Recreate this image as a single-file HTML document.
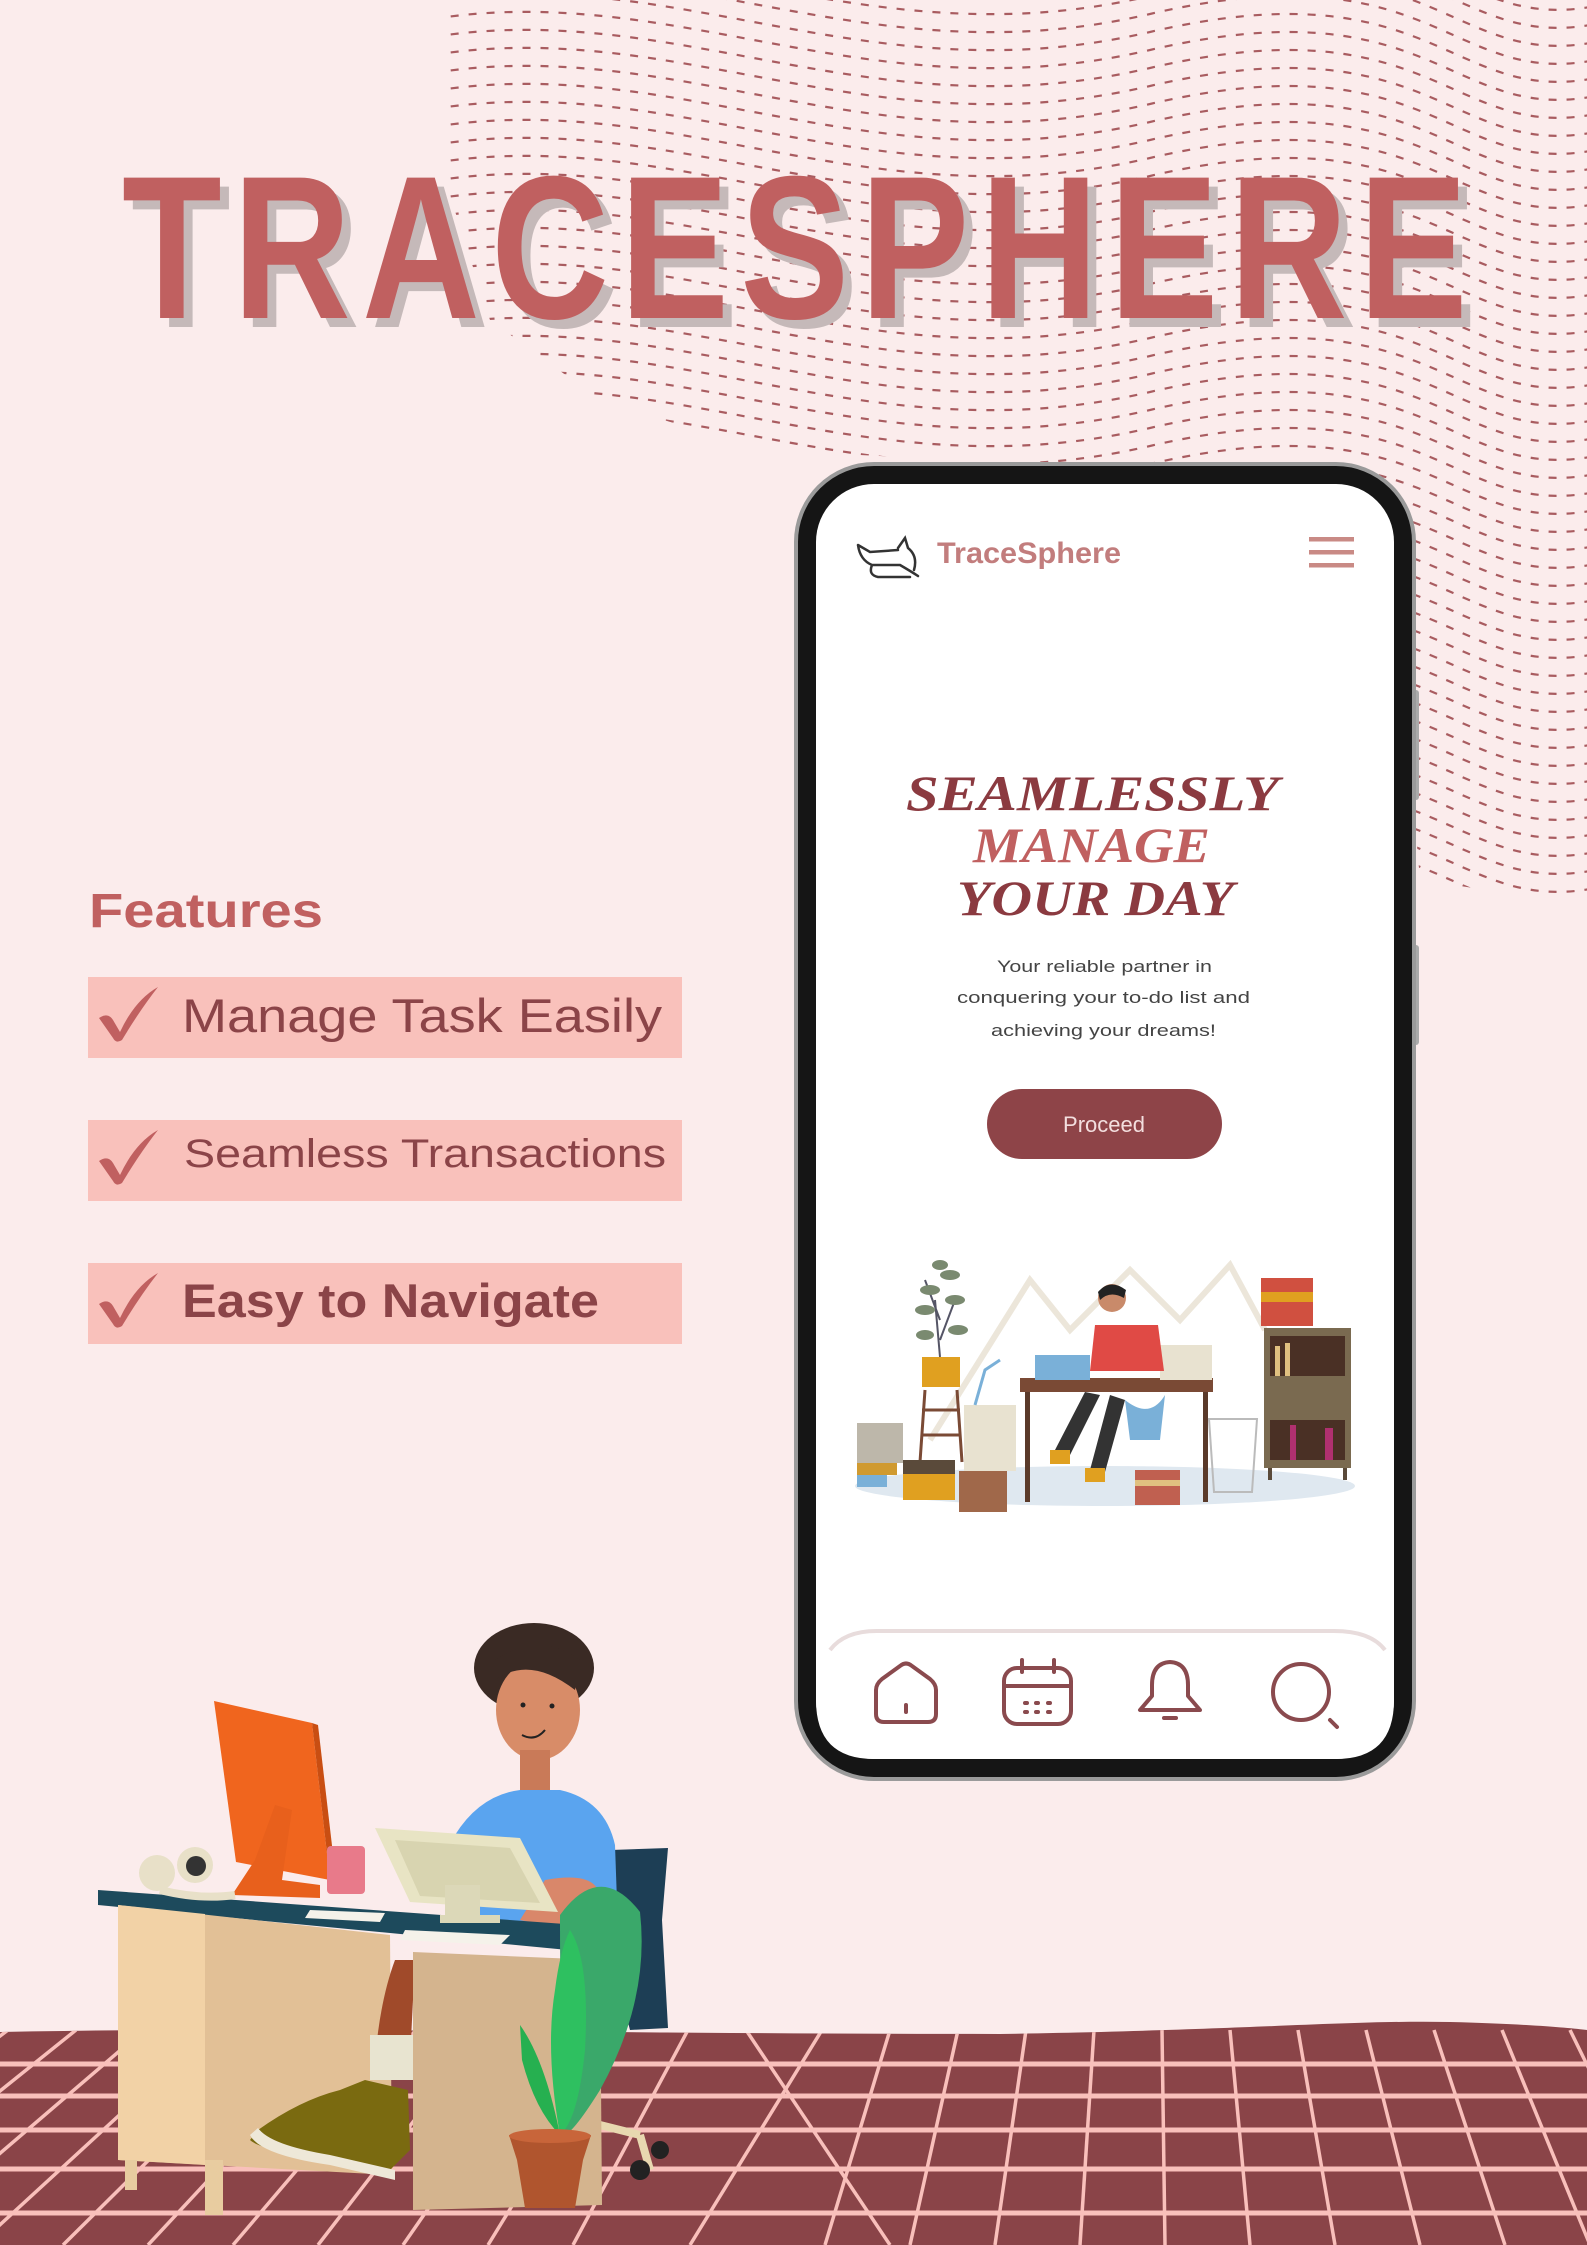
<!DOCTYPE html>
<html><head><meta charset="utf-8"><style>
html,body{margin:0;padding:0;background:#fbecec;}
svg{display:block;}
</style></head><body>
<svg width="1587" height="2245" viewBox="0 0 1587 2245" xmlns="http://www.w3.org/2000/svg">
<defs>
<clipPath id="blob"><path d="M445,0 L1587,0 L1587,905 L1420,880 L1400,650 L1250,480 L1000,462 L760,450 L600,400 L490,320 L445,180 Z"/></clipPath>
<path id="w" d="M380,0 C650,-70 850,90 1150,20 S1450,110 1620,60" fill="none" stroke="#9b4348" stroke-width="2.2" stroke-dasharray="8 10"/>
<clipPath id="floor"><path d="M0,2032 C300,2026 600,2034 1000,2034 C1250,2030 1350,2020 1450,2022 C1530,2024 1570,2028 1587,2030 L1587,2245 L0,2245Z"/></clipPath>
</defs>
<rect width="1587" height="2245" fill="#fbecec"/>
<g clip-path="url(#blob)" opacity="0.85">
<use href="#w" y="-60"/><use href="#w" y="-42"/><use href="#w" y="-24"/><use href="#w" y="-6"/><use href="#w" y="12"/><use href="#w" y="30"/><use href="#w" y="48"/><use href="#w" y="66"/><use href="#w" y="84"/><use href="#w" y="102"/><use href="#w" y="120"/><use href="#w" y="138"/><use href="#w" y="156"/><use href="#w" y="174"/><use href="#w" y="192"/><use href="#w" y="210"/><use href="#w" y="228"/><use href="#w" y="246"/><use href="#w" y="264"/><use href="#w" y="282"/><use href="#w" y="300"/><use href="#w" y="318"/><use href="#w" y="336"/><use href="#w" y="354"/><use href="#w" y="372"/><use href="#w" y="390"/><use href="#w" y="408"/><use href="#w" y="426"/><use href="#w" y="444"/><use href="#w" y="462"/><use href="#w" y="480"/><use href="#w" y="498"/><use href="#w" y="516"/><use href="#w" y="534"/><use href="#w" y="552"/><use href="#w" y="570"/><use href="#w" y="588"/><use href="#w" y="606"/><use href="#w" y="624"/><use href="#w" y="642"/><use href="#w" y="660"/><use href="#w" y="678"/><use href="#w" y="696"/><use href="#w" y="714"/><use href="#w" y="732"/><use href="#w" y="750"/><use href="#w" y="768"/><use href="#w" y="786"/><use href="#w" y="804"/><use href="#w" y="822"/><use href="#w" y="840"/><use href="#w" y="858"/><use href="#w" y="876"/><use href="#w" y="894"/>
</g>
<!-- title -->
<g font-family="Liberation Sans, sans-serif" font-weight="bold" font-size="204">
<text transform="translate(131,327) scale(0.8,1)" x="0" y="0" textLength="1682" lengthAdjust="spacing" fill="#c5b9b9">TRACESPHERE</text>
<text transform="translate(122,318) scale(0.8,1)" x="0" y="0" textLength="1682" lengthAdjust="spacing" fill="#c06060">TRACESPHERE</text>
</g>
<!-- features -->
<text x="89" y="927" font-family="Liberation Sans, sans-serif" font-weight="bold" font-size="48" fill="#c06060" textLength="234" lengthAdjust="spacingAndGlyphs">Features</text>
<g fill="#f9c1bb">
<rect x="88" y="977" width="594" height="81"/>
<rect x="88" y="1120" width="594" height="81"/>
<rect x="88" y="1263" width="594" height="81"/>
</g>
<g fill="#c06060">
<path d="M99,1018 Q108,1012 113,1020 L120,1032 Q135,1000 158,987 Q140,1010 122,1040 Q116,1044 113,1038 Z"/>
<path d="M99,1161 Q108,1155 113,1163 L120,1175 Q135,1143 158,1130 Q140,1153 122,1183 Q116,1187 113,1181 Z"/>
<path d="M99,1304 Q108,1298 113,1306 L120,1318 Q135,1286 158,1273 Q140,1296 122,1326 Q116,1330 113,1324 Z"/>
</g>
<g font-family="Liberation Sans, sans-serif" fill="#8b4448">
<text x="182" y="1032" font-size="47" textLength="480" lengthAdjust="spacingAndGlyphs">Manage Task Easily</text>
<text x="184" y="1167" font-size="40" textLength="482" lengthAdjust="spacingAndGlyphs">Seamless Transactions</text>
<text x="182" y="1317" font-size="47" font-weight="bold" textLength="417" lengthAdjust="spacingAndGlyphs">Easy to Navigate</text>
</g>
<!-- phone -->
<rect x="1411" y="690" width="8" height="110" rx="3" fill="#aaa"/>
<rect x="1411" y="945" width="8" height="100" rx="3" fill="#aaa"/>
<rect x="796" y="464" width="618" height="1315" rx="78" fill="#151515" stroke="#9a9a9a" stroke-width="4"/>
<rect x="816" y="484" width="578" height="1275" rx="58" fill="#fff"/>
<g stroke="#333" stroke-width="2.5" fill="none" stroke-linecap="round">
<path d="M858,545 Q860,560 872,565 L900,565 Q912,572 918,576 M872,565 Q868,575 878,577 L910,577 M898,548 L905,538 L908,548 Q918,556 914,570 M858,545 L870,552 L898,550"/>
</g>
<text x="937" y="563" font-family="Liberation Sans, sans-serif" font-weight="bold" font-size="30" fill="#c27d7d" textLength="184" lengthAdjust="spacingAndGlyphs">TraceSphere</text>
<g fill="#c98a85"><rect x="1309" y="537" width="45" height="4.5"/><rect x="1309" y="550" width="45" height="4.5"/><rect x="1309" y="563" width="45" height="4.5"/></g>
<g font-family="Liberation Serif, serif" font-weight="bold" font-style="italic" font-size="50">
<text x="906" y="810" fill="#8b3a40" textLength="373" lengthAdjust="spacingAndGlyphs">SEAMLESSLY</text>
<text x="973" y="862" fill="#c06060" textLength="237" lengthAdjust="spacingAndGlyphs">MANAGE</text>
<text x="957" y="915" fill="#8b3a40" textLength="277" lengthAdjust="spacingAndGlyphs">YOUR DAY</text>
</g>
<g font-family="Liberation Sans, sans-serif" font-size="17" fill="#444">
<text x="997" y="972" textLength="215" lengthAdjust="spacingAndGlyphs">Your reliable partner in</text>
<text x="957" y="1003" textLength="293" lengthAdjust="spacingAndGlyphs">conquering your to-do list and</text>
<text x="991" y="1036" textLength="225" lengthAdjust="spacingAndGlyphs">achieving your dreams!</text>
</g>
<rect x="987" y="1089" width="235" height="70" rx="35" fill="#8e4448"/>
<text x="1104" y="1132" text-anchor="middle" font-family="Liberation Sans, sans-serif" font-size="22" fill="#f3dede">Proceed</text>
<!-- illustration -->
<g>
<path d="M930,1440 L1030,1280 L1070,1330 L1130,1270 L1180,1320 L1230,1265 L1265,1330" fill="none" stroke="#ece6da" stroke-width="6"/>
<ellipse cx="1105" cy="1486" rx="250" ry="20" fill="#dfe8f0"/>
<path d="M940,1357 L935,1300 M940,1340 L955,1300 M940,1320 L925,1280" stroke="#556" stroke-width="2"/>
<g fill="#7a8a70"><ellipse cx="930" cy="1290" rx="10" ry="5"/><ellipse cx="950" cy="1275" rx="10" ry="5"/><ellipse cx="925" cy="1310" rx="10" ry="5"/><ellipse cx="955" cy="1300" rx="10" ry="5"/><ellipse cx="940" cy="1265" rx="8" ry="5"/><ellipse cx="958" cy="1330" rx="10" ry="5"/><ellipse cx="925" cy="1335" rx="9" ry="5"/></g>
<rect x="922" y="1357" width="38" height="30" fill="#e0a020"/>
<path d="M925,1390 L920,1462 M957,1390 L962,1462 M922,1410 L960,1410 M922,1435 L960,1435" stroke="#7a4a35" stroke-width="3"/>
<rect x="857" y="1423" width="46" height="40" fill="#bdb7aa"/>
<rect x="857" y="1463" width="40" height="12" fill="#d09a30"/>
<rect x="857" y="1475" width="30" height="12" fill="#7ab0d8"/>
<rect x="903" y="1460" width="52" height="40" fill="#e0a020"/>
<rect x="903" y="1460" width="52" height="14" fill="#5a4a3a"/>
<rect x="964" y="1405" width="52" height="66" fill="#e8e2d0"/>
<rect x="959" y="1471" width="48" height="41" fill="#a0684a"/>
<path d="M975,1405 L985,1370 L1000,1360" stroke="#7ab0d8" stroke-width="3" fill="none"/>
<rect x="1020" y="1378" width="193" height="14" fill="#7a4a35"/>
<rect x="1025" y="1392" width="5" height="110" fill="#5a3a2a"/><rect x="1203" y="1392" width="5" height="110" fill="#5a3a2a"/>
<rect x="1035" y="1355" width="55" height="25" fill="#7ab0d8"/>
<rect x="1160" y="1345" width="52" height="35" fill="#e8e2d0"/>
<path d="M1090,1371 L1164,1371 L1158,1325 L1095,1325 Z" fill="#e04a45"/>
<circle cx="1112" cy="1298" r="14" fill="#c98a6a"/>
<path d="M1098,1292 Q1110,1278 1126,1290 L1124,1298 Q1110,1290 1100,1300 Z" fill="#222"/>
<path d="M1085,1392 L1055,1450 L1070,1455 L1100,1395 M1110,1395 L1090,1470 L1105,1472 L1125,1400" fill="#333"/>
<rect x="1050" y="1450" width="20" height="14" fill="#e0a020"/><rect x="1085" y="1468" width="20" height="14" fill="#e0a020"/>
<path d="M1125,1400 Q1150,1420 1165,1395 L1160,1440 L1130,1440 Z" fill="#7ab0d8"/>
<rect x="1135" y="1470" width="45" height="35" fill="#c06050"/>
<rect x="1135" y="1480" width="45" height="6" fill="#e0c080"/>
<path d="M1209,1419 L1257,1419 L1252,1492 L1214,1492 Z" fill="none" stroke="#bbb" stroke-width="2"/>
<rect x="1261" y="1278" width="52" height="48" fill="#d05040"/>
<rect x="1261" y="1292" width="52" height="10" fill="#e0a020"/>
<rect x="1264" y="1328" width="87" height="140" fill="#7a6a50"/>
<rect x="1270" y="1336" width="75" height="40" fill="#4a3025"/>
<rect x="1270" y="1420" width="75" height="40" fill="#4a3025"/>
<rect x="1275" y="1346" width="5" height="30" fill="#e0c080"/><rect x="1285" y="1343" width="5" height="33" fill="#e0c080"/><rect x="1290" y="1425" width="6" height="35" fill="#b03070"/><rect x="1325" y="1428" width="8" height="32" fill="#b03070"/>
<rect x="1268" y="1468" width="4" height="12" fill="#5a4a3a"/><rect x="1343" y="1468" width="4" height="12" fill="#5a4a3a"/>
</g>
<!-- bottom nav -->
<path d="M816,1700 Q820,1632 880,1632 L1330,1632 Q1392,1632 1394,1700 L1394,1700 Q1394,1759 1336,1759 L874,1759 Q816,1759 816,1700Z" fill="#fff"/>
<path d="M830,1650 Q845,1630 880,1631 L1330,1631 Q1370,1630 1385,1650" fill="none" stroke="#e8dcdc" stroke-width="4"/>
<g fill="none" stroke="#8a4a4e" stroke-width="4" stroke-linecap="round" stroke-linejoin="round">
<path d="M876,1690 L876,1714 Q876,1722 884,1722 L928,1722 Q936,1722 936,1714 L936,1690 Q936,1684 930,1679 L912,1666 Q906,1661 900,1666 L882,1679 Q876,1684 876,1690Z"/>
<path d="M906,1705 L906,1712"/>
<rect x="1004" y="1668" width="67" height="56" rx="13"/>
<path d="M1004,1686 L1071,1686 M1022,1660 L1022,1672 M1054,1660 L1054,1672"/>
<path d="M1025,1703 h2 M1036,1703 h2 M1048,1703 h2 M1025,1712 h2 M1036,1712 h2 M1048,1712 h2"/>
<path d="M1140,1710 L1200,1710 L1188,1696 L1188,1685 Q1188,1663 1170,1662 Q1152,1663 1152,1685 L1152,1696 Z"/>
<path d="M1164,1718 L1176,1718"/>
<circle cx="1301" cy="1692" r="28"/>
<path d="M1330,1720 L1337,1727"/>
</g>
<!-- floor -->
<g clip-path="url(#floor)">
<rect x="0" y="2000" width="1587" height="245" fill="#8a4448"/>
<g stroke="#f9c0bb" stroke-width="5">
<line x1="0" y1="2064" x2="1587" y2="2064"/><line x1="0" y1="2096" x2="1587" y2="2096"/><line x1="0" y1="2130" x2="1587" y2="2130"/><line x1="0" y1="2169" x2="1587" y2="2169"/><line x1="0" y1="2213" x2="1587" y2="2213"/>
</g>
<g stroke="#f9c0bb" stroke-width="3.5">
<line x1="-128" y1="2030" x2="-447" y2="2245"/><line x1="-60" y1="2030" x2="-362" y2="2245"/><line x1="8" y1="2030" x2="-277" y2="2245"/><line x1="76" y1="2030" x2="-192" y2="2245"/><line x1="144" y1="2030" x2="-107" y2="2245"/><line x1="212" y1="2030" x2="-22" y2="2245"/><line x1="280" y1="2030" x2="63" y2="2245"/><line x1="348" y1="2030" x2="148" y2="2245"/><line x1="416" y1="2030" x2="233" y2="2245"/><line x1="484" y1="2030" x2="318" y2="2245"/><line x1="552" y1="2030" x2="403" y2="2245"/><line x1="620" y1="2030" x2="488" y2="2245"/><line x1="688" y1="2030" x2="573" y2="2245"/><line x1="746" y1="2030" x2="890" y2="2245"/><line x1="822" y1="2030" x2="690" y2="2245"/><line x1="890" y1="2030" x2="825" y2="2245"/><line x1="958" y1="2030" x2="910" y2="2245"/><line x1="1026" y1="2030" x2="995" y2="2245"/><line x1="1094" y1="2030" x2="1080" y2="2245"/><line x1="1162" y1="2030" x2="1165" y2="2245"/><line x1="1230" y1="2030" x2="1250" y2="2245"/><line x1="1298" y1="2030" x2="1335" y2="2245"/><line x1="1366" y1="2030" x2="1420" y2="2245"/><line x1="1434" y1="2030" x2="1505" y2="2245"/><line x1="1502" y1="2030" x2="1590" y2="2245"/><line x1="1570" y1="2030" x2="1675" y2="2245"/>
</g>
</g>
<!-- 3D person at desk -->
<g>
<path d="M611,1850 L668,1848 L662,1920 L668,2028 L630,2030 L612,1960 Z" fill="#1d3e55"/>
<path d="M600,2125 L640,2135 M640,2135 L650,2170" stroke="#e8d8b0" stroke-width="8"/>
<circle cx="640" cy="2170" r="10" fill="#222"/><circle cx="660" cy="2150" r="9" fill="#222"/>
<ellipse cx="534" cy="1668" rx="60" ry="45" fill="#3a2a24"/>
<ellipse cx="538" cy="1710" rx="42" ry="50" fill="#d88c68"/>
<path d="M495,1680 Q530,1655 575,1690 L580,1660 Q540,1630 495,1660Z" fill="#3a2a24"/>
<circle cx="523" cy="1705" r="2.5" fill="#222"/><circle cx="552" cy="1706" r="2.5" fill="#222"/>
<path d="M522,1735 Q535,1742 545,1730" stroke="#222" stroke-width="2" fill="none"/>
<rect x="520" y="1750" width="30" height="40" fill="#c97a58"/>
<path d="M455,1835 Q480,1795 520,1790 L560,1790 Q605,1800 615,1845 L618,1930 L470,1930 Z" fill="#5aa4ef"/>
<path d="M545,1880 Q600,1870 600,1900 Q600,1930 570,1930 L520,1920 Z" fill="#d9876a"/>
<path d="M98,1890 L620,1928 L620,1955 L98,1905 Z" fill="#1d4a5c"/>
<path d="M118,1905 L390,1935 L392,2175 L118,2160 Z" fill="#e2c096"/>
<path d="M118,1905 L205,1914 L205,2165 L118,2160Z" fill="#f2d2a6"/>
<rect x="125" y="2160" width="12" height="30" fill="#e8cca0"/>
<rect x="205" y="2160" width="18" height="55" fill="#e8cca0"/>
<path d="M395,1960 Q380,2000 375,2060 L410,2060 L415,1960Z" fill="#a04a2a"/>
<rect x="370" y="2035" width="45" height="45" fill="#e8e4d0"/>
<path d="M258,2130 Q300,2100 340,2090 L365,2080 L408,2090 L410,2150 L390,2170 L330,2160 Q260,2150 250,2140 Z" fill="#7a6a10"/>
<path d="M250,2135 Q260,2155 330,2165 L395,2180 L395,2170 L330,2155 Q270,2145 258,2128Z" fill="#eee8d8"/>
<path d="M413,1952 L600,1960 L602,2205 L413,2210 Z" fill="#d4b48e"/>
<path d="M214,1701 L312,1723 L330,1880 L236,1862 Z" fill="#f0651e"/>
<path d="M312,1723 L318,1725 L336,1880 L330,1880Z" fill="#c94e12"/>
<path d="M255,1860 L275,1805 L292,1810 L282,1880 L320,1885 L320,1898 L232,1895 Z" fill="#e8601c"/>
<circle cx="157" cy="1873" r="18" fill="#e8e0c8"/><circle cx="195" cy="1865" r="18" fill="#e8e0c8"/><circle cx="196" cy="1866" r="10" fill="#333"/>
<path d="M160,1890 Q200,1900 235,1895" stroke="#e8e0c8" stroke-width="8" fill="none"/>
<rect x="327" y="1846" width="38" height="48" rx="4" fill="#e87a8a"/>
<path d="M310,1910 L385,1913 L380,1922 L305,1918Z" fill="#f5f2ea"/>
<path d="M405,1930 L510,1935 L500,1945 L400,1940Z" fill="#f5f2ea"/>
<path d="M375,1828 L520,1838 L558,1912 L410,1902 Z" fill="#e8e4c4"/>
<path d="M395,1840 L510,1848 L540,1903 L420,1896Z" fill="#d8d4b0"/>
<rect x="445" y="1885" width="35" height="30" fill="#dcd8b8"/>
<rect x="440" y="1915" width="60" height="8" fill="#dcd8b8"/>
<path d="M560,1915 Q600,1860 640,1912 Q650,2000 600,2090 Q575,2130 565,2135 Q560,2050 560,1915Z" fill="#3aa86a"/>
<path d="M570,1930 Q590,1960 585,2050 Q578,2120 560,2135 Q545,2050 555,1990 Q560,1950 570,1930Z" fill="#2ec060"/>
<path d="M520,2025 Q545,2060 560,2135 Q535,2110 522,2060Z" fill="#26b050"/>
<path d="M509,2135 L591,2135 L583,2160 L575,2208 L525,2208 L517,2160 Z" fill="#b0552e"/>
<ellipse cx="550" cy="2136" rx="41" ry="7" fill="#c8653a"/>
</g>
</svg>
</body></html>
